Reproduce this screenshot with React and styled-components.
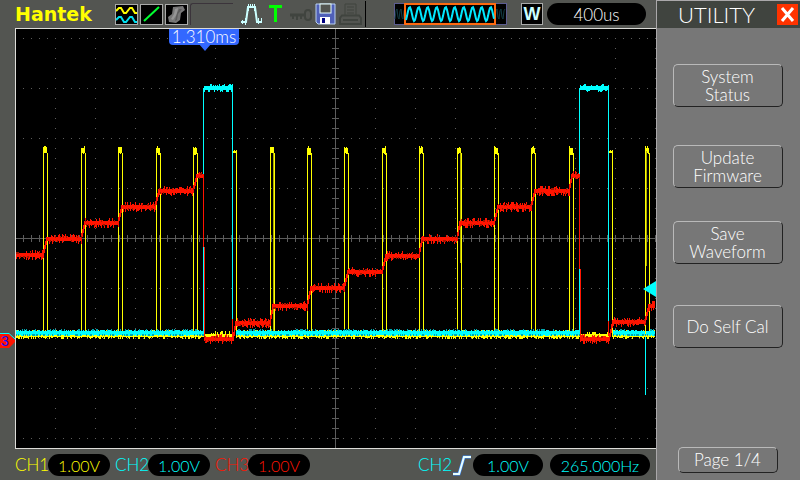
import React from "react";
import styled, { createGlobalStyle } from "styled-components";

const GlobalStyle = createGlobalStyle`
  * { box-sizing: border-box; }
  body { margin: 0; background: #535551; }
`;

const YELLOW = "#ffff00";
const CYAN = "#00ffff";
const RED = "#ff1400";

const Screen = styled.div`
  display: grid;
  grid-template-columns: minmax(0, 1fr) 144px;
  min-height: 100vh;
  background: #535551;
  font-family: Lato, "Liberation Sans", sans-serif;
  font-weight: 300;
`;

const Scope = styled.main`
  display: flex;
  flex-direction: column;
  min-width: 0;
`;

const Toolbar = styled.header`
  display: flex;
  align-items: center;
  justify-content: space-between;
  height: 28px;
  padding: 0 10px 0 15px;
`;

const Group = styled.div`
  display: flex;
  align-items: center;
  gap: ${(p) => p.$gap}px;
`;

const Brand = styled.h1`
  margin: 0;
  width: 98px;
  font: 700 19px/28px "DejaVu Sans", sans-serif;
  color: ${YELLOW};
`;

const Tile = styled.svg`
  display: block;
  width: 23px;
  height: 21px;
  background: #000;
  border: 1px solid #a9aaa9;
`;

const Slot = styled.span`
  width: 43px;
  height: 22px;
  margin-right: 6px;
  border-top: 1px solid #3b343b;
  border-left: 1px solid #3b343b;
  border-top-left-radius: 3px;
`;

const Glyph = styled.svg`
  display: block;
  width: ${(p) => p.$w}px;
  height: 22px;
`;

const Divider = styled.span`
  width: 1px;
  height: 26px;
  background: #000;
`;

const WindowTile = styled.span`
  width: 22px;
  height: 22px;
  background: #000;
  border: 1px solid #a9aaa9;
  color: #ccffff;
  font: 700 18px/20px "Liberation Sans", sans-serif;
  display: flex;
  justify-content: center;
`;

const Pill = styled.output`
  display: block;
  width: ${(p) => p.$w}px;
  height: 22px;
  border-radius: 11px;
  background: #000;
  color: ${(p) => p.$color};
  font-size: ${(p) => (p.$large ? 17 : 16)}px;
  line-height: 23px;
  text-align: center;
`;

const PlotArea = styled.section`
  position: relative;
  flex: 1;
  display: flex;
  margin-left: 15px;
  background: #000;
  border: solid #dcdcd8;
  border-width: 1px 0 1px 1px;
`;

const Plot = styled.svg`
  display: block;
  width: 100%;
  height: auto;
  flex: 1;
`;

const TimeTag = styled.div`
  position: absolute;
  left: 153px;
  top: 0;
  width: 70px;
  height: 16px;
  border-radius: 0 0 4px 4px;
  background: #3368ff;
  color: #fff;
  font-size: 17px;
  line-height: 16px;
  text-align: center;
  &::after {
    content: "";
    position: absolute;
    left: 30px;
    top: 15px;
    border: solid transparent;
    border-width: 7px 6px 0;
    border-top-color: #3368ff;
  }
`;

const TriggerArrow = styled.span`
  position: absolute;
  right: 0;
  top: 252px;
  border: solid transparent;
  border-width: 8px 13px 8px 0;
  border-right-color: ${CYAN};
`;

const ChannelTag = styled.svg`
  position: absolute;
  left: -16px;
  top: 303px;
  width: 16px;
  height: 18px;
`;

const StatusBar = styled.footer`
  display: flex;
  align-items: center;
  justify-content: space-between;
  height: 31px;
  padding: 0 6px 0 15px;
`;

const ChannelLabel = styled.span`
  width: 33px;
  color: ${(p) => p.$color};
  font-size: 17px;
  line-height: 22px;
`;

const Side = styled.aside`
  display: flex;
  flex-direction: column;
  align-items: center;
  background: #777777;
  border: solid #aaa8aa;
  border-width: 1px 0 0 1px;
`;

const SideHeader = styled.div`
  align-self: stretch;
  display: flex;
  align-items: center;
  justify-content: space-between;
  height: 27px;
  padding: 0 2px 0 21px;
  background: #40443f;
`;

const SideTitle = styled.h2`
  margin: 0;
  color: #fff;
  font-size: 22px;
  font-weight: 300;
  line-height: 26px;
`;

const CloseButton = styled.button`
  width: 21px;
  height: 21px;
  padding: 0;
  border: 0;
  background: #ff3300;
  svg { display: block; }
`;

const Menu = styled.nav`
  flex: 1;
  display: flex;
  flex-direction: column;
  align-items: center;
  padding: 36px 2px 7px 0;
`;

const MenuButton = styled.button`
  width: ${(p) => (p.$small ? 100 : 110)}px;
  height: ${(p) => (p.$small ? 26 : 43)}px;
  margin: 0 0 ${(p) => p.$after || 0}px;
  padding: 0;
  border: 1px solid;
  border-color: #b9b9b9 #222 #222 #b9b9b9;
  border-radius: 5px;
  background: transparent;
  color: #fff;
  font: 300 17px/18px Lato, "Liberation Sans", sans-serif;
  white-space: pre-line;
`;

const Spacer = styled.span`
  flex: 1;
`;

/* Plot geometry: 640 x 419 units, origin at the inner top-left corner. */
const W = 640;
const H = 419;

const makeNoise = (seed) => {
  let s = seed;
  return () => {
    s = (s * 1103515245 + 12345) % 2147483648;
    return s / 2147483648;
  };
};

const band = (x0, x1, top, bottom, jitter, seed) => {
  const rnd = makeNoise(seed);
  let d = "";
  for (let x = x0; x <= x1; x += 1) {
    const a = top - (rnd() > 0.55 ? Math.ceil(rnd() * jitter) : 0);
    const b = bottom + (rnd() > 0.55 ? Math.ceil(rnd() * jitter) : 0);
    d += `M${x} ${a}h1V${b}h-1z`;
  }
  return d;
};

const bar = (x, top, bottom) => `M${x} ${top}h1V${bottom}h-1z`;

const pulses = [
  [27, 31], [65, 69], [102, 106], [140, 144], [177, 181], [217, 220],
  [254, 258], [291, 295], [328, 332], [366, 370], [403, 407], [441, 445],
  [478, 482], [515, 519], [553, 557], [593, 596], [629, 633],
];

const yellowPath = pulses
  .map(([l, r], i) => {
    const late = i === 5 || i === 15;
    return (
      (late ? "" : bar(l, 119, 308)) +
      bar(r, 124, 308) +
      (late ? band(l, r, 122, 124, 1, 3) : band(l, r - 1, 119, 124, 2, 7 + i))
    );
  })
  .join("");

const lowSegments = [[0, 187], [220, 563], [597, 638]];
const yellowLow = lowSegments.map(([a, b], i) => band(a, b, 303, 308, 2, 40 + i)).join("")
  + band(188, 217, 305, 308, 3, 51) + band(564, 593, 305, 308, 3, 52);
const cyanLow = lowSegments.map(([a, b], i) => band(a, b, 302, 306, 1, 60 + i)).join("");
const cyanShade = lowSegments
  .map(([a, b], i) => {
    const rnd = makeNoise(90 + i);
    let d = "";
    for (let x = a; x <= b; x += 1) {
      const v = rnd();
      if (v > 0.8) d += bar(x, 300, 302);
      else if (v < 0.3) d += bar(x, 305, 307);
    }
    return d;
  })
  .join("");
const cyanHigh =
  band(188, 216, 57, 61, 2, 71) + band(564, 592, 57, 61, 2, 72) +
  bar(187, 59, 304) + bar(216, 60, 304) + bar(563, 59, 304) + bar(592, 60, 304);

const steps = [
  [0, 27, 226], [31, 65, 210], [69, 102, 194], [106, 139, 178], [143, 177, 162], [181, 187, 147],
  [188, 217, 310],
  [220, 254, 294], [257, 291, 277], [295, 328, 259], [332, 366, 243], [370, 403, 227],
  [406, 441, 210], [444, 478, 194], [482, 515, 178], [519, 553, 162], [556, 563, 147],
  [564, 593, 310],
  [597, 629, 293], [633, 638, 277],
];

const redPath = steps
  .map(([a, b, y], i) => {
    let d = band(a, b, y - 2, y + 2, 3, 110 + i);
    const next = steps[i + 1];
    if (next && next[0] - b > 1) {
      const n = next[0] - b;
      for (let k = 0; k < n; k += 1) {
        const from = Math.round(y + ((next[2] - y) * k) / n);
        const to = Math.round(y + ((next[2] - y) * (k + 1)) / n);
        d += bar(b + k, to - 2, from + 2);
      }
    }
    return d;
  })
  .join("") + bar(187, 147, 218) + bar(188, 218, 309) + bar(563, 147, 240) + bar(564, 240, 309)
  + bar(216, 290, 307) + bar(592, 292, 307);

const redShade = steps
  .map(([a, b, y], i) => {
    const rnd = makeNoise(210 + i);
    let d = "";
    for (let x = a; x <= b; x += 1) {
      const v = rnd();
      if (v > 0.85) d += bar(x, y - 3, y - 1);
      else if (v < 0.15) d += bar(x, y + 1, y + 3);
    }
    return d;
  })
  .join("");

const dots = (() => {
  let d = "";
  for (let y = 9; y < H; y += 50) {
    if (y !== 209) for (let x = 7; x < W; x += 8) d += `M${x} ${y}h1v1h-1z`;
  }
  for (let x = 39; x < W; x += 40) {
    if (x !== 319) for (let y = 9; y < H; y += 10) d += `M${x} ${y}h1v1h-1z`;
  }
  return d;
})();

const axes = (() => {
  let d = `M0 209h${W}v1H0zM319 0h1v${H}h-1z`;
  for (let x = 7; x < W; x += 8) d += `M${x} 206h1v7h-1z`;
  for (let y = 9; y < H; y += 10) d += `M316 ${y}h7v1h-7z`;
  return d;
})();

const sine = (x0, x1, period, amplitude) => {
  let d = "";
  for (let x = x0; x <= x1; x += 1) {
    const y = 11 - amplitude * Math.sin(((x - x0) / period) * 2 * Math.PI - 1);
    d += `${x === x0 ? "M" : "L"}${x} ${y.toFixed(1)}`;
  }
  return d;
};

function Waveforms() {
  return (
    <Plot viewBox={`0 0 ${W} ${H}`} preserveAspectRatio="none" shapeRendering="crispEdges" role="img" aria-label="Waveforms">
      <path d={dots} fill="#5c5c5c" />
      <path d={axes} fill="#5c5c5c" />
      <path d={yellowPath} fill={YELLOW} />
      <path d="M630 122h1v115h-1zM444 124h1v110h-1zM257 124h1v184h-1z" fill="#aaaa00" />
      <path d={yellowLow} fill={YELLOW} />
      <path d={cyanLow + cyanHigh + bar(629, 237, 366)} fill={CYAN} />
      <path d={bar(629, 237, 308)} fill={YELLOW} />
      <path d={cyanShade} fill="#00a8b0" />
      <path d={redPath} fill={RED} />
      <path d={redShade} fill="#a81400" />
    </Plot>
  );
}

const channels = [
  { name: "CH1", color: YELLOW },
  { name: "CH2", color: CYAN },
  { name: "CH3", color: RED },
];

const menuItems = [
  { label: "System\nStatus", after: 38 },
  { label: "Update\nFirmware", after: 33 },
  { label: "Save\nWaveform", after: 41 },
  { label: "Do Self Cal", after: 0 },
];

export default function App() {
  return (
    <>
      <GlobalStyle />
      <Screen>
        <Scope>
          <Toolbar>
            <Group $gap={6}>
              <Group $gap={2}>
                <Brand>Hantek</Brand>
                <Tile viewBox="0 0 21 19" fill="none" strokeWidth="2">
                  <path d="M0 6L3 3H5L8 8H10L14 3H16L19 8H21" stroke={YELLOW} />
                  <path d="M0 15L3 12H5L8 17H10L14 12H16L19 17H21" stroke="#00e0f0" />
                </Tile>
                <Tile viewBox="0 0 21 19" fill="none">
                  <path d="M3 16L18 2" stroke="#00ff30" strokeWidth="2" />
                </Tile>
                <Tile viewBox="0 0 21 19">
                  <path d="M7 2L17 1L19 5L15 8L14 15L10 18L3 17L2 12L6 9Z" fill="#777" />
                  <path d="M9 4L12 3L11 9L7 15L5 14L8 9Z" fill="#959595" />
                  <path d="M13 4L16 4L12 9L11 15L9 16L11 8Z" fill="#5c5c5c" />
                </Tile>
                <Slot />
                <Glyph $w={22} viewBox="0 0 22 22" fill="none" stroke="#ccffff">
                  <path d="M0 19H5L7 4H14L16 19H21" strokeWidth="2" />
                  <path d="M1.5 21V17M4.5 22V15M7.5 8V1M9.5 5V1M11.5 5V1M13.5 8V1M17.5 21V15M20.5 18V15" />
                </Glyph>
              </Group>
              <Glyph $w={14} viewBox="0 0 14 22" fill="#00ff00">
                <path d="M0 2H13V5H8V19H5V5H0Z" />
              </Glyph>
              <Group $gap={3}>
                <Glyph $w={23} viewBox="0 0 23 22" fill="none" stroke="#40443f">
                  <path d="M1 12H16" strokeWidth="3" />
                  <path d="M4 12V16M8 12V17M12 12V16" strokeWidth="2" />
                  <rect x="16" y="7" width="6" height="10" rx="3" strokeWidth="2" />
                </Glyph>
                <Glyph $w={21} viewBox="0 0 21 22">
                  <path d="M1 1H20V21H3L1 19Z" fill="#5060b8" stroke="#b8d0f0" />
                  <rect x="5" y="1" width="11" height="9" fill="#535551" stroke="#e8ffff" />
                  <rect x="5" y="14" width="10" height="7" fill="#fff" />
                  <rect x="7" y="15" width="3" height="5" fill="#000080" />
                </Glyph>
                <Glyph $w={23} viewBox="0 0 23 22" fill="none" stroke="#40443f">
                  <path d="M6 12V1H17V12M8 4H15M8 7H15M8 10H15" />
                  <path d="M3 12.5H20L22 15V21H1V15Z" strokeWidth="2" />
                  <path d="M4 17H19" strokeWidth="2" />
                </Glyph>
                <Divider />
              </Group>
            </Group>
            <Group $gap={13}>
              <Glyph $w={115} viewBox="0 0 115 22" fill="none">
                <rect x="1.5" y="0.5" width="112" height="21" fill="#000" stroke="#5c5c90" />
                <path d={sine(2, 112, 4, 6)} stroke="#123c44" />
                <rect x="12" y="1" width="90" height="20" fill="#000" stroke="#ff6a10" strokeWidth="2" />
                <path d={sine(13, 101, 9, 7)} stroke="#00e8ff" strokeWidth="2" />
              </Glyph>
              <Group $gap={4}>
                <WindowTile>W</WindowTile>
                <Pill $w={99} $color="#fff" $large>400us</Pill>
              </Group>
            </Group>
          </Toolbar>

          <PlotArea>
            <Waveforms />
            <TimeTag>1.310ms</TimeTag>
            <TriggerArrow />
            <ChannelTag viewBox="0 0 16 18">
              <path d="M0 2H9L15 8V10L9 16H0Z" fill={RED} />
              <path d="M0 1.5H9L15 7" fill="none" stroke={CYAN} />
              <text x="1" y="14" fill="#1010ff" fontFamily="Liberation Sans, sans-serif" fontWeight="400" fontSize="14">3</text>
            </ChannelTag>
          </PlotArea>

          <StatusBar>
            <Group $gap={5}>
              {channels.map((c) => (
                <Group $gap={0} key={c.name}>
                  <ChannelLabel $color={c.color}>{c.name}</ChannelLabel>
                  <Pill $w={62} $color={c.color}>1.00V</Pill>
                </Group>
              ))}
            </Group>
            <Group $gap={1}>
              <ChannelLabel $color={CYAN}>CH2</ChannelLabel>
              <Glyph $w={20} viewBox="0 0 20 22" fill="none">
                <path d="M1 20H7L12 3H19" stroke="#3c8cff" strokeWidth="3" />
                <path d="M1 20H7L12 3H19" stroke="#e8ffff" strokeWidth="2" />
              </Glyph>
              <Group $gap={7}>
                <Pill $w={70} $color={CYAN}>1.00V</Pill>
                <Pill $w={100} $color={CYAN}>265.000Hz</Pill>
              </Group>
            </Group>
          </StatusBar>
        </Scope>

        <Side>
          <SideHeader>
            <SideTitle>UTILITY</SideTitle>
            <CloseButton type="button" aria-label="Close">
              <svg width="21" height="21" viewBox="0 0 21 21">
                <path d="M5 4L16 17M16 4L5 17" stroke="#fff" strokeWidth="3" />
              </svg>
            </CloseButton>
          </SideHeader>
          <Menu>
            {menuItems.map((m) => (
              <MenuButton type="button" key={m.label} $after={m.after}>{m.label}</MenuButton>
            ))}
            <Spacer />
            <MenuButton type="button" $small>Page 1/4</MenuButton>
          </Menu>
        </Side>
      </Screen>
    </>
  );
}
